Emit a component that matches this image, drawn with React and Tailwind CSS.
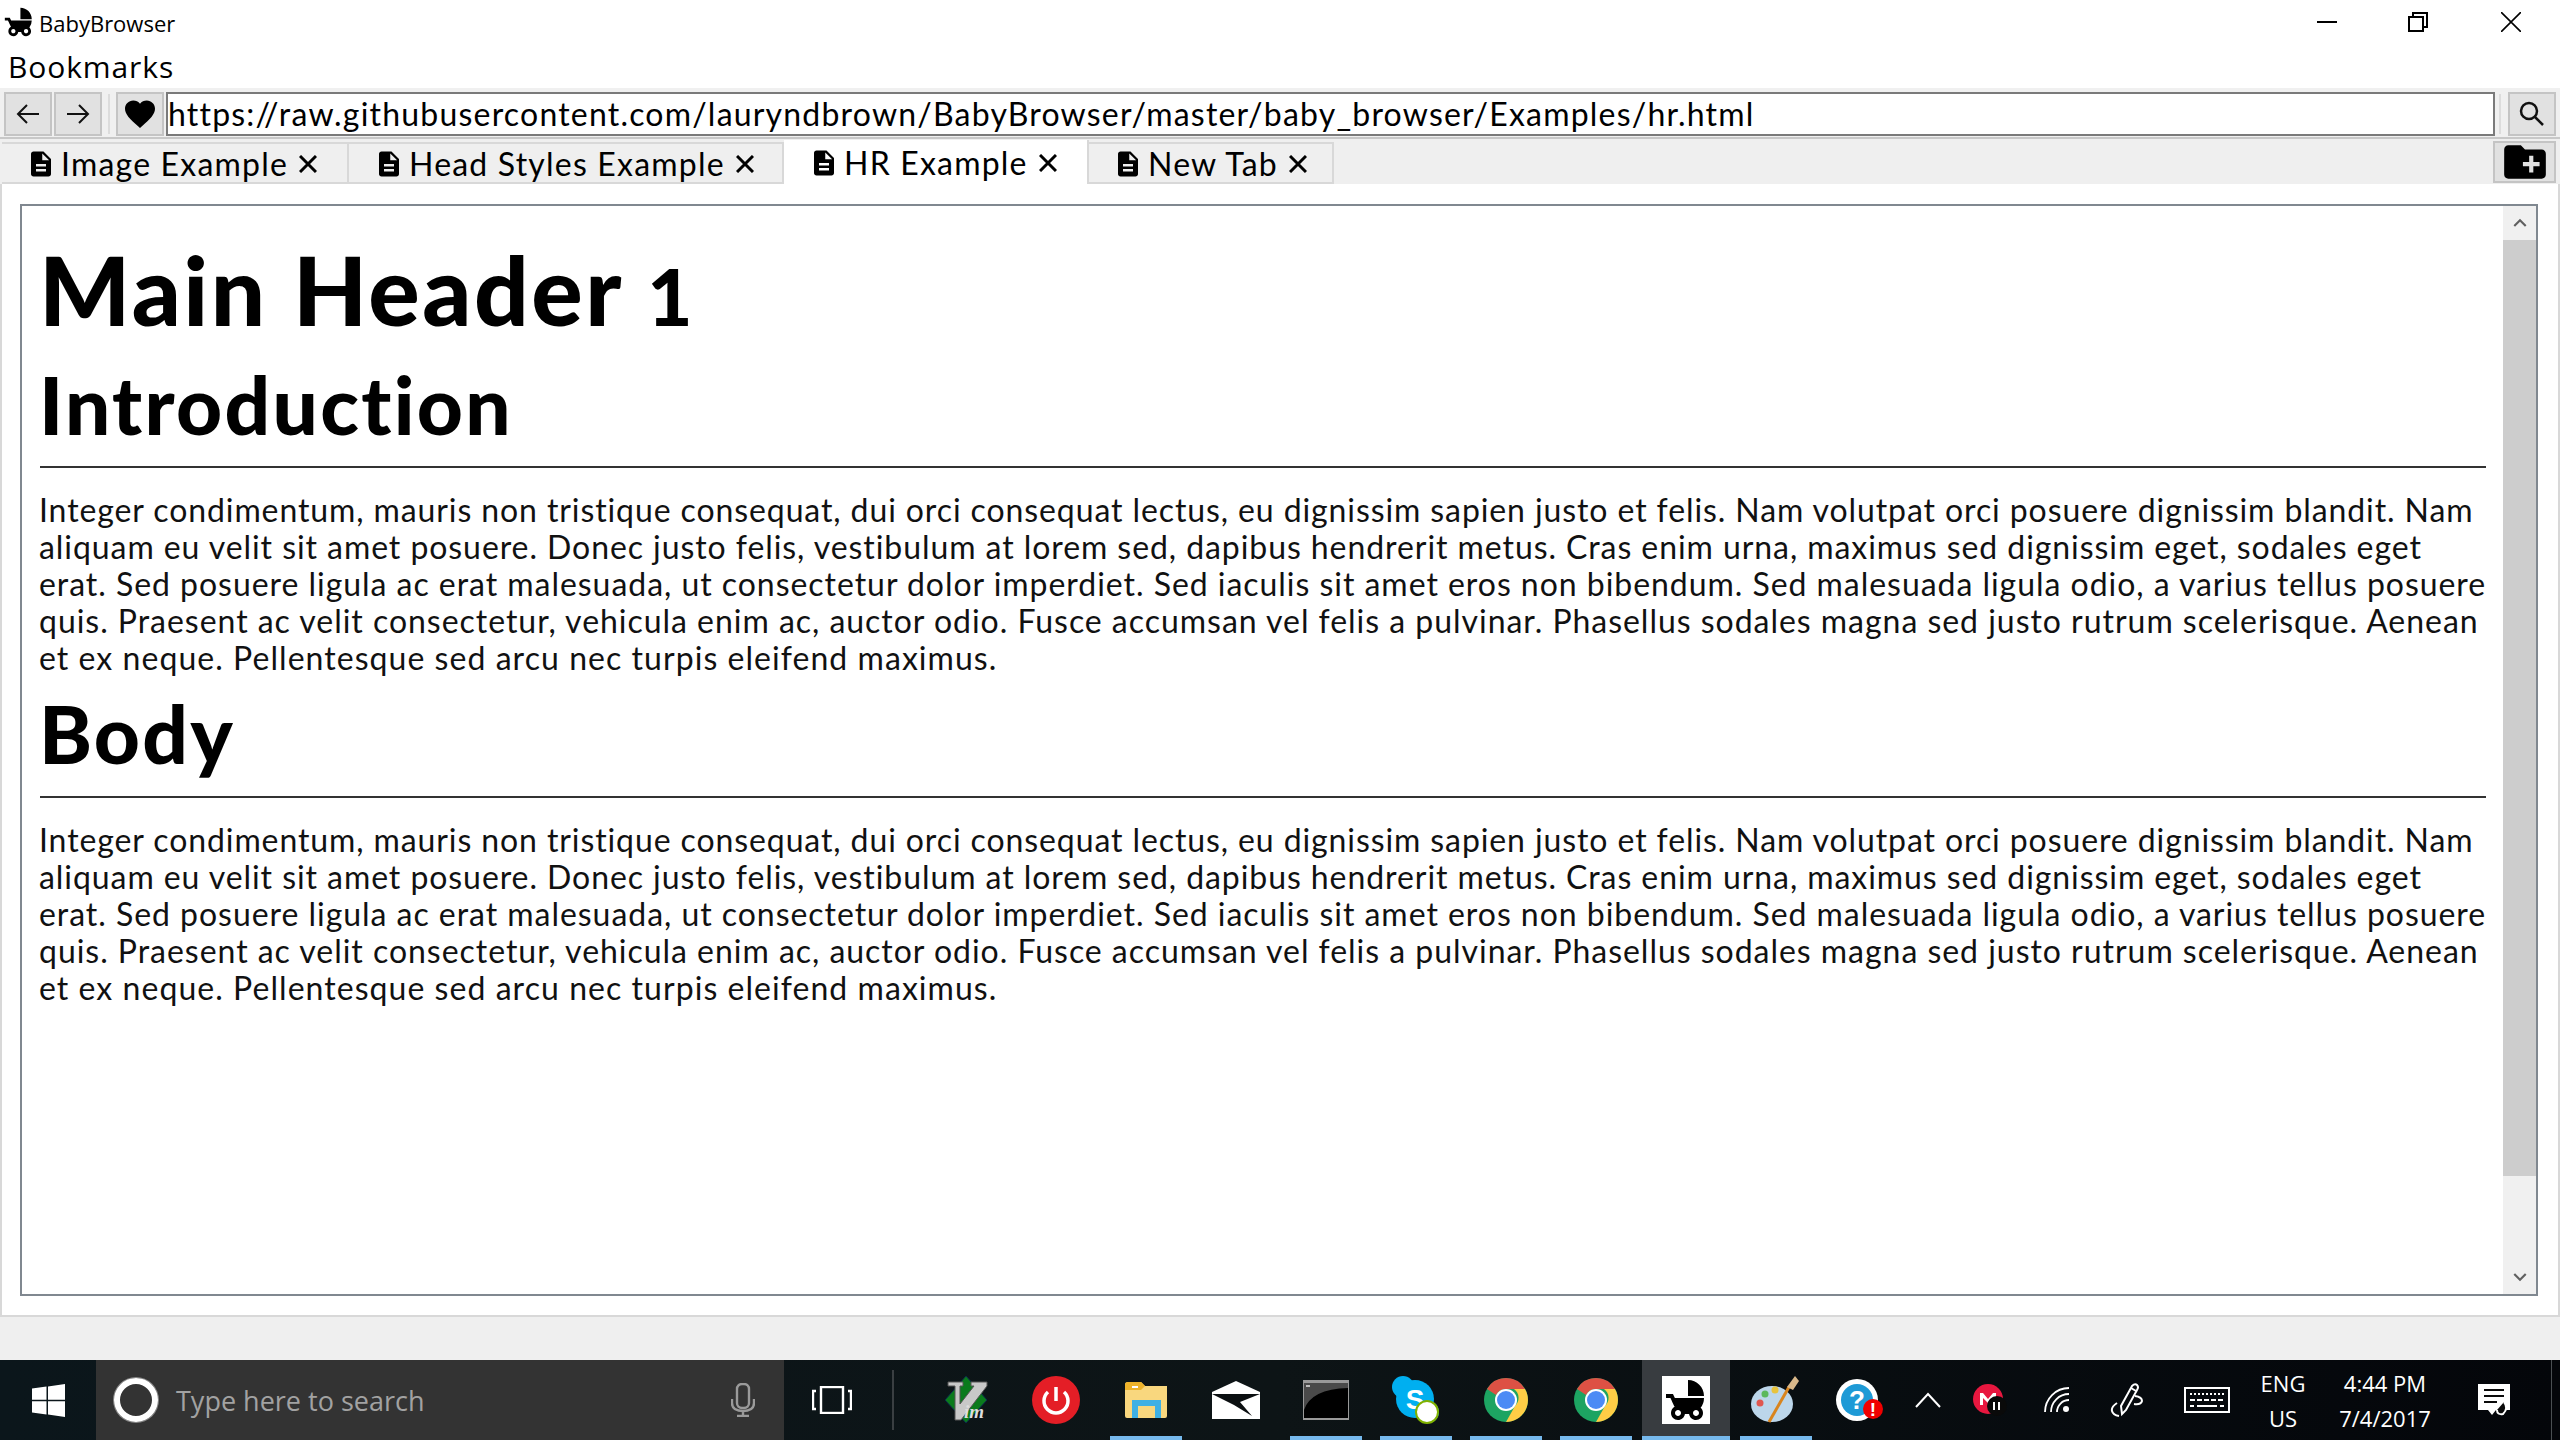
import { MdChildFriendly, MdDescription, MdCreateNewFolder, MdFavorite, MdKeyboardArrowUp, MdKeyboardArrowDown } from 'react-icons/md';

const RALEWAY = 'font-["Lato","Open_Sans",sans-serif]';
const SEGOE = 'font-["Open_Sans","Noto_Sans",sans-serif]';

const PARAGRAPH = [
  { text: 'Integer condimentum, mauris non tristique consequat, dui orci consequat lectus, eu dignissim sapien justo et felis. Nam volutpat orci posuere dignissim blandit. Nam', tracking: 'tracking-[0.9px]' },
  { text: 'aliquam eu velit sit amet posuere. Donec justo felis, vestibulum at lorem sed, dapibus hendrerit metus. Cras enim urna, maximus sed dignissim eget, sodales eget', tracking: 'tracking-[0.93px]' },
  { text: 'erat. Sed posuere ligula ac erat malesuada, ut consectetur dolor imperdiet. Sed iaculis sit amet eros non bibendum. Sed malesuada ligula odio, a varius tellus posuere', tracking: 'tracking-[0.96px]' },
  { text: 'quis. Praesent ac velit consectetur, vehicula enim ac, auctor odio. Fusce accumsan vel felis a pulvinar. Phasellus sodales magna sed justo rutrum scelerisque. Aenean', tracking: 'tracking-[0.97px]' },
  { text: 'et ex neque. Pellentesque sed arcu nec turpis eleifend maximus.', tracking: 'tracking-[1.05px]' },
];

function Paragraph() {
  return (
    <div className="text-[32px] leading-[37px] text-[#111]">
      {PARAGRAPH.map((line) => (
        <div key={line.text} className={`whitespace-nowrap ${line.tracking}`}>{line.text}</div>
      ))}
    </div>
  );
}

function ToolButton({ children, className = '' }) {
  return (
    <button className={`flex h-[44px] w-[48px] shrink-0 items-center justify-center border-2 border-[#c4c4c4] bg-[#e1e1e1] ${className}`}>
      {children}
    </button>
  );
}

function Tab({ label, active, className }) {
  return (
    <div className={`flex items-center border-r-2 border-[#d8d8d8] ${active ? 'h-[44px] self-end bg-white pt-[1px]' : 'h-[42px] self-end border-t-2 border-b-2 pt-[2px]'} ${className}`}>
      <MdDescription className="h-[30px] w-[30px] shrink-0" />
      <span className="ml-[5px] whitespace-nowrap text-[32px] leading-none tracking-[1.2px]">{label}</span>
      <svg width="18" height="18" viewBox="0 0 18 18" className="ml-[11px] shrink-0">
        <path d="M1 1 L17 17 M17 1 L1 17" stroke="#000" strokeWidth="3" />
      </svg>
    </div>
  );
}

function Slot({ children, underline, active, className = 'w-[90px]' }) {
  return (
    <div className={`relative flex h-full shrink-0 items-center justify-center ${className}`}>
      {active && <div className="absolute inset-y-0 left-[1px] right-[1px] bg-[#383c40]" />}
      <div className="relative flex items-center justify-center">{children}</div>
      {underline && <div className={`absolute bottom-0 h-[4px] bg-[#76b9ed] ${active ? 'left-[1px] right-[1px]' : 'left-[9px] right-[9px]'}`} />}
    </div>
  );
}

function VimIcon() {
  return (
    <svg width="46" height="48" viewBox="0 0 46 48">
      <path d="M23 0 L44 24 L23 47 L2 24 Z" fill="#0a7a1c" stroke="#0a2a4a" strokeWidth="1" />
      <path d="M5 6 H20 V10 H17 V28 L31 10 H28 V6 H44 V10 L18 44 H12 L12 10 H5 Z" fill="#c8c8c8" stroke="#555" strokeWidth="1" />
      <text x="21" y="42" fontFamily="Liberation Serif" fontSize="19" fontStyle="italic" fontWeight="700" fill="#ddd">im</text>
    </svg>
  );
}

function PowerIcon() {
  return (
    <svg width="48" height="48" viewBox="0 0 48 48">
      <circle cx="24" cy="24" r="24" fill="#e41e26" />
      <path d="M16 16 A12 12 0 1 0 32 16" fill="none" stroke="#fff" strokeWidth="3.5" />
      <path d="M24 11 V25" stroke="#fff" strokeWidth="3.5" />
    </svg>
  );
}

function FolderIcon() {
  return (
    <svg width="42" height="36" viewBox="0 0 42 36">
      <path d="M0 3 Q0 0 3 0 H16 L20 4 H42 V34 Q42 36 40 36 H2 Q0 36 0 34 Z" fill="#f9d77e" />
      <path d="M0 3 Q0 0 3 0 H16 L20 4 L16 8 H0 Z" fill="#eeb32a" />
      <path d="M7 4 H13 V6 H7 Z" fill="#fff" />
      <path d="M7 36 V18 H36 V36 H30 V24 H13 V36 Z" fill="#3fb0e4" />
    </svg>
  );
}

function MailIcon() {
  return (
    <svg width="48" height="38" viewBox="0 0 48 38">
      <path d="M0 11 L24 0 L48 11 V38 H0 Z" fill="#fff" />
      <path d="M0 13 H48 L28 21 L40 35 L22 24 Z" fill="#0b0f11" />
    </svg>
  );
}

function CmdIcon() {
  return (
    <svg width="46" height="40" viewBox="0 0 46 40">
      <rect x="0" y="0" width="46" height="40" fill="#9a9a9a" />
      <rect x="1" y="3" width="44" height="35" fill="#000" />
      <path d="M1 30 Q8 9 45 8 V3 H1 Z" fill="#4a4a4a" />
      <rect x="3" y="5" width="4" height="2" fill="#bbb" />
    </svg>
  );
}

function SkypeIcon() {
  return (
    <svg width="48" height="48" viewBox="0 0 48 48">
      <circle cx="11" cy="11" r="11" fill="#00aff0" />
      <circle cx="36" cy="36" r="11" fill="#00aff0" />
      <circle cx="23" cy="23" r="19" fill="#00aff0" />
      <text x="23" y="33" textAnchor="middle" fontFamily="Liberation Sans" fontSize="28" fontWeight="700" fill="#fff">S</text>
      <circle cx="35" cy="36" r="11" fill="#fff" stroke="#7fb100" strokeWidth="2" />
    </svg>
  );
}

function ChromeIcon() {
  return (
    <svg width="44" height="44" viewBox="0 0 44 44">
      <circle cx="22" cy="22" r="22" fill="#1da462" />
      <path d="M22 0 A22 22 0 0 1 41 11 H22 A11 11 0 0 0 12 17 L3 11 A22 22 0 0 1 22 0 Z" fill="#dd5144" />
      <path d="M41 11 A22 22 0 0 1 22 44 L31 28 A11 11 0 0 0 30 11 Z" fill="#ffcd46" />
      <circle cx="22" cy="22" r="11" fill="#fff" />
      <circle cx="22" cy="22" r="9" fill="#4c8bf5" />
    </svg>
  );
}

function PaintIcon() {
  return (
    <svg width="50" height="50" viewBox="0 0 50 50">
      <ellipse cx="21" cy="29" rx="21" ry="18" fill="#bcd6ea" />
      <circle cx="9" cy="28" r="3.5" fill="#e0574f" />
      <circle cx="14" cy="19" r="3.5" fill="#5cb85c" />
      <circle cx="24" cy="15" r="3.5" fill="#e8c33c" />
      <path d="M18 47 L38 12" stroke="#d9851e" strokeWidth="3" />
      <path d="M36 12 L44 1 L48 6 L42 15 Z" fill="#d9b88a" />
    </svg>
  );
}

function HelpIcon() {
  return (
    <svg width="48" height="44" viewBox="0 0 48 44">
      <circle cx="21" cy="22" r="21" fill="#fff" />
      <circle cx="21" cy="22" r="16" fill="#1e9ad6" />
      <text x="21" y="31" textAnchor="middle" fontFamily="Liberation Sans" fontSize="26" fontWeight="700" fill="#fff">?</text>
      <circle cx="37" cy="31" r="10" fill="#f00000" />
      <text x="37" y="38" textAnchor="middle" fontFamily="Liberation Sans" fontSize="19" fontWeight="700" fill="#fff">!</text>
    </svg>
  );
}

function MegaIcon() {
  return (
    <svg width="34" height="32" viewBox="0 0 34 32">
      <circle cx="15" cy="15" r="15" fill="#e8173f" />
      <path d="M7 21 V9 H10 L15 15 L20 9 H23 V21 H20 V14 L15 19 L10 14 V21 Z" fill="#fff" />
      <circle cx="24" cy="22" r="10" fill="#0a0a0a" />
      <path d="M21 18 V26 M26 18 V26" stroke="#fff" strokeWidth="2" />
    </svg>
  );
}

function WifiIcon() {
  return (
    <svg width="26" height="26" viewBox="0 0 26 26" fill="none" stroke="#fff" strokeWidth="1.8">
      <path d="M1 25 A24 24 0 0 1 25 1" />
      <path d="M7 25 A18 18 0 0 1 25 7" />
      <path d="M13 25 A12 12 0 0 1 25 13" />
      <circle cx="22" cy="22" r="3" fill="#fff" stroke="none" />
    </svg>
  );
}

function PenIcon() {
  return (
    <svg width="34" height="34" viewBox="0 0 34 34" fill="none" stroke="#fff" strokeWidth="2">
      <path d="M12 31 L11 23 L22 3 Q25 0 27 2 Q29 4 27 7 L16 27 Z" />
      <path d="M25 13 Q32 14 32 18 Q31 22 24 21" />
      <path d="M7 20 Q1 24 2 28 Q3 32 9 33" />
      <path d="M21 5 L26 8" />
    </svg>
  );
}

function KeyboardIcon() {
  return (
    <svg width="46" height="26" viewBox="0 0 46 26">
      <rect x="1" y="1" width="44" height="24" fill="none" stroke="#fff" strokeWidth="2" />
      <path d="M6 7 H40" stroke="#fff" strokeWidth="2" strokeDasharray="2 2" />
      <path d="M6 13 H40" stroke="#fff" strokeWidth="2" strokeDasharray="5 2" />
      <path d="M6 19 H10 M13 19 H33 M36 19 H40" stroke="#fff" strokeWidth="2" />
    </svg>
  );
}

function NotificationIcon() {
  return (
    <svg width="34" height="32" viewBox="0 0 34 32">
      <path d="M1 0 H33 V26 H19 L15 31 L11 26 H1 Z" fill="#fff" />
      <path d="M7 6 H27 M7 12 H27 M7 18 H20" stroke="#0a0a0a" strokeWidth="2.2" />
      <path d="M27 18 Q32 24 26 30 Q20 31 20 26" fill="#0a0a0a" stroke="#fff" strokeWidth="2" />
    </svg>
  );
}

export default function App() {
  return (
    <div className={`flex h-[1440px] w-[2560px] flex-col overflow-hidden bg-white text-black ${RALEWAY}`}>
      {/* Window title */}
      <div className="flex h-[44px] shrink-0 items-center justify-between">
        <div className="flex items-center">
          <MdChildFriendly className="ml-[2px] h-[34px] w-[34px]" />
          <span className={`ml-[3px] mt-[2px] text-[22px] ${SEGOE}`}>BabyBrowser</span>
        </div>
        <div className="flex items-center">
          <svg width="20" height="20" viewBox="0 0 20 20" className="mr-[71px]"><path d="M0 10 H20" stroke="#000" strokeWidth="2" /></svg>
          <svg width="20" height="20" viewBox="0 0 20 20" className="mr-[73px]" fill="none" stroke="#000" strokeWidth="2"><rect x="1" y="5" width="14" height="14" /><path d="M5 5 V1 H19 V15 H15" /></svg>
          <svg width="20" height="20" viewBox="0 0 20 20" className="mr-[39px]"><path d="M0 0 L20 20 M20 0 L0 20" stroke="#000" strokeWidth="1.6" /></svg>
        </div>
      </div>
      <div className={`flex h-[44px] shrink-0 items-center pl-[8px] text-[30px] tracking-[0.9px] ${SEGOE}`}>Bookmarks</div>

      {/* Toolbar */}
      <div className="flex h-[51px] shrink-0 items-start border-t-2 border-b-2 border-t-[#f0f0f0] border-b-[#c8c8c8] bg-[#f0f0f0] pl-[4px] pr-[4px] pt-[2px]">
        <ToolButton>
          <svg width="24" height="24" viewBox="0 0 24 24" fill="none" stroke="#111" strokeWidth="2"><path d="M23 12 H2 M11 3 L2 12 L11 21" /></svg>
        </ToolButton>
        <ToolButton className="ml-[2px]">
          <svg width="24" height="24" viewBox="0 0 24 24" fill="none" stroke="#111" strokeWidth="2"><path d="M1 12 H22 M13 3 L22 12 L13 21" /></svg>
        </ToolButton>
        <div className="ml-[6px] mt-[2px] h-[40px] w-[2px] bg-[#dcdcdc]" />
        <ToolButton className="ml-[6px]">
          <MdFavorite className="h-[36px] w-[36px]" />
        </ToolButton>
        <div className="ml-[2px] flex h-[44px] min-w-0 flex-1 items-center overflow-hidden whitespace-nowrap border-2 border-[#7a7a7a] bg-white text-[32px] tracking-[1.2px]">
          https://raw.githubusercontent.com/lauryndbrown/BabyBrowser/master/baby_browser/Examples/hr.html
        </div>
        <div className="ml-[4px] mt-[2px] h-[40px] w-[2px] bg-[#dcdcdc]" />
        <ToolButton className="ml-[7px]">
          <svg width="26" height="26" viewBox="0 0 26 26" fill="none" stroke="#111" strokeWidth="2.5"><circle cx="10" cy="10" r="8" /><path d="M16 16 L24 24" /></svg>
        </ToolButton>
      </div>

      {/* Tabs */}
      <div className="flex h-[45px] shrink-0 bg-[#efefef] pl-[2px]">
        <Tab label="Image Example" className="w-[347px] pl-[24px]" />
        <Tab label="Head Styles Example" className="w-[435px] pl-[25px]" />
        <Tab label="HR Example" active className="w-[305px] pl-[25px]" />
        <Tab label="New Tab" className="w-[245px] pl-[24px]" />
        <div className="ml-auto mr-[4px] mt-[2px] flex h-[42px] w-[63px] items-center justify-center border-2 border-[#c4c4c4] bg-[#e1e1e1]">
          <MdCreateNewFolder className="h-[50px] w-[50px]" />
        </div>
      </div>

      {/* Page */}
      <div className="flex min-h-0 flex-1 flex-col border-x-2 border-b-2 border-[#d8d8d8] bg-white pl-[18px] pr-[20px] pt-[20px] pb-[19px]">
        <div className="flex min-h-0 flex-1 border-2 border-[#808890]">
          <div className="min-w-0 flex-1 pl-[17px] pr-[18px]">
            <h1 className="mt-[27px] text-[96px] font-black leading-[112px] tracking-[2.5px]">
              Main Header <span className="text-[78px]">1</span>
            </h1>
            <h2 className="mt-[5px] text-[80px] font-black leading-[94px] tracking-[2.3px]">Introduction</h2>
            <hr className="mr-[-1px] ml-[1px] mt-[15px] mb-[23px] border-t-2 border-[#333]" />
            <Paragraph />
            <h2 className="mt-[10px] text-[80px] font-black leading-[94px] tracking-[2.3px]">Body</h2>
            <hr className="mr-[-1px] ml-[1px] mt-[16px] mb-[23px] border-t-2 border-[#333]" />
            <Paragraph />
          </div>
          {/* Scrollbar */}
          <div className="flex w-[33px] shrink-0 flex-col bg-[#f0f0f0]">
            <div className="flex h-[34px] shrink-0 items-center justify-center text-[#606060]">
              <MdKeyboardArrowUp className="h-[26px] w-[26px]" />
            </div>
            <div className="h-[936px] shrink-0 bg-[#cdcdcd]" />
            <div className="mt-auto flex h-[34px] shrink-0 items-center justify-center text-[#606060]">
              <MdKeyboardArrowDown className="h-[26px] w-[26px]" />
            </div>
          </div>
        </div>
      </div>
      <div className="h-[43px] shrink-0 bg-[#efefef]" />

      {/* Taskbar */}
      <div className={`flex h-[80px] shrink-0 items-center bg-gradient-to-r from-[#0b161b] via-[#0d1416] to-[#04060a] ${SEGOE}`}>
        <div className="flex h-full w-[96px] shrink-0 items-center justify-center">
          <svg width="33" height="33" viewBox="0 0 33 33" fill="#fff">
            <path d="M0 4.6 L14.5 2.6 V15.8 H0 Z M16 2.4 L33 0 V15.8 H16 Z M0 17.2 H14.5 V30.4 L0 28.4 Z M16 17.2 H33 V33 L16 30.6 Z" />
          </svg>
        </div>
        <div className="flex h-full w-[688px] shrink-0 items-center bg-[#333333]">
          <div className="ml-[18px] h-[44px] w-[44px] rounded-full border-[6px] border-white shadow-[0_0_0_1px_#888]" />
          <span className="ml-[18px] mt-[2px] text-[27px] text-[#a2a2a2]">Type here to search</span>
          <svg width="24" height="34" viewBox="0 0 24 34" className="ml-auto mr-[29px]" fill="none" stroke="#9a9a9a" strokeWidth="2.4">
            <rect x="6" y="1" width="12" height="24" rx="5" />
            <path d="M1 16 V20 Q1 28 12 28 Q23 28 23 20 V16 M12 28 V33 M6 33 H18" />
          </svg>
        </div>
        <div className="flex h-full w-[96px] shrink-0 items-center justify-center">
          <svg width="40" height="28" viewBox="0 0 40 28" fill="none" stroke="#fff" strokeWidth="2.4">
            <rect x="9" y="1" width="22" height="26" />
            <path d="M4 5 H1 V23 H4 M36 5 H39 V23 H36" />
          </svg>
        </div>
        <div className="ml-[12px] h-[60px] w-[2px] bg-[#3a3f42]" />
        <div className="ml-[27px] flex h-full">
          <Slot><VimIcon /></Slot>
          <Slot><PowerIcon /></Slot>
          <Slot underline><FolderIcon /></Slot>
          <Slot><MailIcon /></Slot>
          <Slot underline><CmdIcon /></Slot>
          <Slot underline><SkypeIcon /></Slot>
          <Slot underline><ChromeIcon /></Slot>
          <Slot underline><ChromeIcon /></Slot>
          <Slot underline active>
            <div className="flex h-[48px] w-[48px] items-center justify-center bg-white">
              <MdChildFriendly className="h-[48px] w-[48px] text-black" />
            </div>
          </Slot>
          <Slot underline><PaintIcon /></Slot>
        </div>
        <Slot className="ml-[-6px] w-[90px]"><HelpIcon /></Slot>
        <Slot className="w-[45px]">
          <svg width="26" height="16" viewBox="0 0 26 16" fill="none" stroke="#fff" strokeWidth="2"><path d="M1 15 L13 2 L25 15" /></svg>
        </Slot>
        <Slot className="w-[80px]"><MegaIcon /></Slot>
        <Slot className="w-[54px]"><WifiIcon /></Slot>
        <Slot className="w-[86px]"><PenIcon /></Slot>
        <Slot className="w-[74px]"><KeyboardIcon /></Slot>
        <div className="flex h-full w-[78px] shrink-0 flex-col items-center justify-center gap-[5px] text-[22px] leading-[30px] text-white">
          <span>ENG</span>
          <span>US</span>
        </div>
        <div className="flex h-full w-[126px] shrink-0 flex-col items-center justify-center gap-[5px] text-[22px] leading-[30px] text-white">
          <span>4:44 PM</span>
          <span>7/4/2017</span>
        </div>
        <Slot className="w-[92px]"><NotificationIcon /></Slot>
        <div className="ml-[11px] h-full w-[1px] bg-[#4a4f52]" />
      </div>
    </div>
  );
}
